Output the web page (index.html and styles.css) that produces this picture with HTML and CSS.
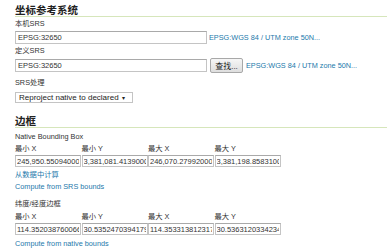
FILE: index.html
```html
<!DOCTYPE html>
<html lang="zh-CN">
<head>
    <meta charset="UTF-8">
    <title>坐标参考系统</title>
    <link rel="stylesheet" href="styles.css">
</head>
<body>
    <h2 class="section-title">坐标参考系统</h2>
    <div class="label first">本机SRS</div>
    <div class="row">
        <input class="text wide" type="text" value="EPSG:32650">
        <a class="srs-link" href="#">EPSG:WGS 84 / UTM zone 50N...</a>
    </div>
    <div class="label">定义SRS</div>
    <div class="row row-btn">
        <input class="text wide" type="text" value="EPSG:32650">
        <button class="find">查找...</button>
        <a class="srs-link" href="#">EPSG:WGS 84 / UTM zone 50N...</a>
    </div>
    <div class="label srs-handling">SRS处理</div>
    <div class="select">Reproject native to declared <span class="arrow">▾</span></div>

    <h2 class="section-title bbox-title">边框</h2>
    <div class="label native">Native Bounding Box</div>
    <div class="bbox">
        <span class="coord-label">最小 X</span>
        <span class="coord-label">最小 Y</span>
        <span class="coord-label">最大 X</span>
        <span class="coord-label">最大 Y</span>
        <input class="text coord" type="text" value="245,950.55094000">
        <input class="text coord" type="text" value="3,381,081.41390000">
        <input class="text coord" type="text" value="246,070.27992000">
        <input class="text coord" type="text" value="3,381,198.85831000">
    </div>
    <a class="action first-action" href="#">从数据中计算</a>
    <a class="action" href="#">Compute from SRS bounds</a>

    <div class="label latlon">纬度/经度边框</div>
    <div class="bbox">
        <span class="coord-label">最小 X</span>
        <span class="coord-label">最小 Y</span>
        <span class="coord-label">最大 X</span>
        <span class="coord-label">最大 Y</span>
        <input class="text coord" type="text" value="114.352038760066">
        <input class="text coord" type="text" value="30.5352470394179">
        <input class="text coord" type="text" value="114.353313812317">
        <input class="text coord" type="text" value="30.5363120334234">
    </div>
    <a class="action last-action" href="#">Compute from native bounds</a>
</body>
</html>
```

FILE: styles.css
```css
body {
    margin: 0;
    padding: 0 0 0 15px;
    background: #fff;
    color: #333;
    font-family: "Liberation Sans", "Noto Sans CJK SC", sans-serif;
    font-size: 7.3px;
    overflow: hidden;
}
.section-title {
    margin: 4px 0 0;
    font-size: 10.5px;
    line-height: 12px;
    font-weight: bold;
    color: #222;
    border-bottom: 1px solid #d6e6bb;
}
.bbox-title {
    margin-top: 12px;
}
.label {
    line-height: 10px;
    margin: 2px 0 2px;
}
.srs-handling {
    margin-top: 5px;
    margin-bottom: 4px;
}
.native {
    margin-top: 4px;
    margin-bottom: 2px;
}
.latlon {
    margin-top: 7px;
    margin-bottom: 3px;
}
.row {
    display: flex;
    align-items: center;
    gap: 2px;
}
.row-btn {
    margin-top: 0;
}
.text {
    box-sizing: border-box;
    height: 13px;
    margin: 0;
    padding: 0 2px;
    border: 1px solid #c4c4c4;
    border-top-color: #a9a9a9;
    font-family: inherit;
    font-size: 7.5px;
    color: #333;
    background: #fff;
}
.wide {
    width: 192px;
}
.srs-link, .action {
    color: #2479ab;
    text-decoration: none;
}
.find {
    box-sizing: border-box;
    height: 15px;
    width: 33px;
    margin: 0 1px 0 1px;
    padding: 0;
    border: 1px solid #a8a8a8;
    border-radius: 2px;
    background: linear-gradient(#f6f6f6, #dedede);
    font-family: inherit;
    font-size: 8px;
    color: #222;
}
.select {
    box-sizing: border-box;
    width: 118px;
    height: 11px;
    line-height: 9px;
    padding: 0 3px;
    border: 1px solid #c4c4c4;
    font-size: 8px;
    color: #222;
}
.arrow {
    font-size: 6px;
    margin-left: 1px;
}
.bbox {
    display: grid;
    grid-template-columns: repeat(4, 66.5px);
    row-gap: 1px;
}
.coord-label {
    line-height: 10px;
    color: #333;
}
.coord {
    width: 66px;
    height: 12px;
    padding: 0 1px;
    overflow: hidden;
}
.action {
    display: block;
    line-height: 10px;
    margin-top: 2px;
}
.first-action {
    margin-top: 3px;
}
.last-action {
    margin-top: 4px;
}
```
